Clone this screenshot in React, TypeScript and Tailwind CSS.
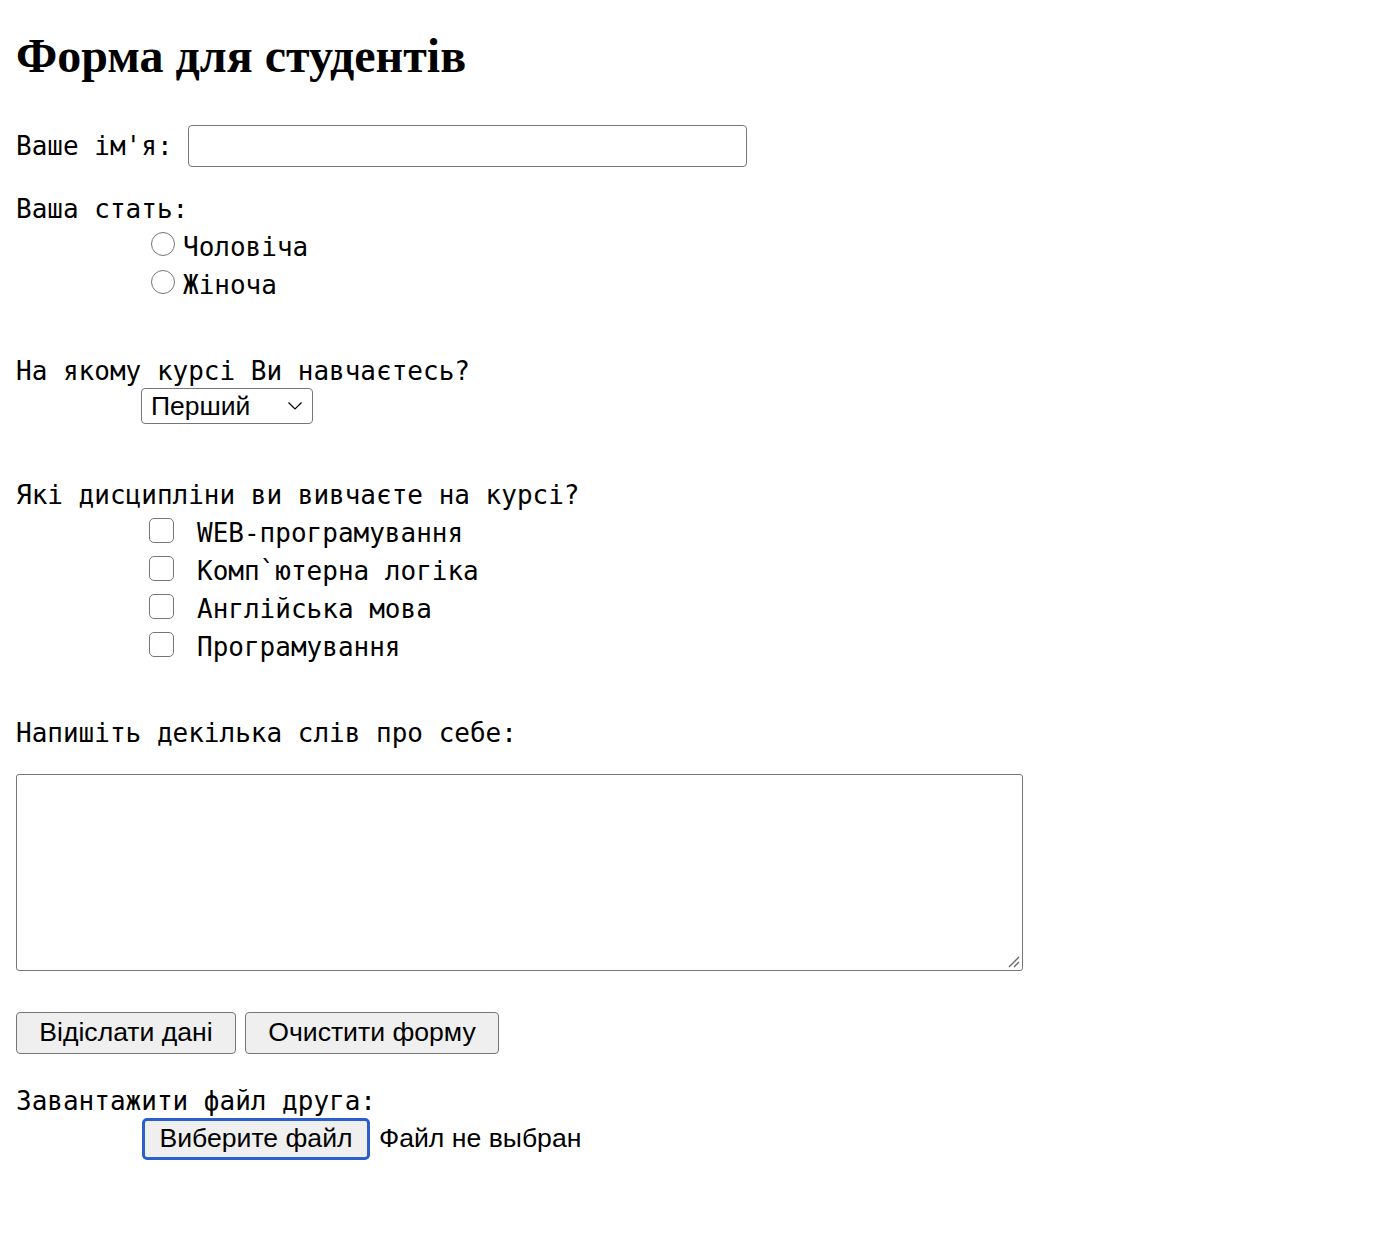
import React from "react";

const mono = "font-['DejaVu_Sans_Mono','Liberation_Mono',monospace] text-[26px] text-black";
const sans = "font-['Liberation_Sans',Arial,sans-serif]";

function Radio({ label }: { label: string }) {
  return (
    <div className="flex h-[38px] items-center pl-[135px]">
      <span className="mb-[6px] inline-block h-[24px] w-[24px] rounded-full border-[1.5px] border-[#767676] bg-white" />
      <span className={`${mono} ml-[8px] leading-[38px]`}>{label}</span>
    </div>
  );
}

function Check({ label }: { label: string }) {
  return (
    <div className="flex h-[38px] items-center pl-[133px]">
      <span className="mb-[6px] inline-block h-[25px] w-[25px] rounded-[5px] border-[1.5px] border-[#767676] bg-white" />
      <span className={`${mono} ml-[23px] leading-[38px]`}>{label}</span>
    </div>
  );
}

export default function App() {
  return (
    <div className="min-h-[1248px] bg-white pl-4 text-black">
      <h1 className="pt-[29px] font-['Liberation_Serif','Times_New_Roman',serif] text-[48px] font-bold leading-[54px]">
        Форма для студентів
      </h1>

      <div className="mt-[42px] flex h-[42px] items-center">
        <span className={`${mono} leading-[38px]`}>Ваше ім'я:</span>
        <div className="ml-[15px] h-[42px] w-[559px] rounded-[4px] border-[1.5px] border-[#767676] bg-white" />
      </div>

      <div className={`${mono} mt-[23px] h-[38px] leading-[38px]`}>Ваша стать:</div>
      <Radio label="Чоловіча" />
      <Radio label="Жіноча" />

      <div className={`${mono} mt-[50px] h-[34px] leading-[34px]`}>На якому курсі Ви навчаєтесь?</div>
      <div className="pl-[125px]">
        <div className="flex h-[36px] w-[172px] items-center justify-between rounded-[4px] border-[1.5px] border-[#767676] bg-white pl-[9px] pr-[9px]">
          <span className={`${sans} text-[26.5px] leading-none`}>Перший</span>
          <svg width="16" height="10" viewBox="0 0 16 10" fill="none">
            <path d="M1.5 1.5 L8 8 L14.5 1.5" stroke="#000" strokeWidth="1.2" />
          </svg>
        </div>
      </div>

      <div className={`${mono} mt-[52px] h-[38px] leading-[38px]`}>Які дисципліни ви вивчаєте на курсі?</div>
      <Check label="WEB-програмування" />
      <Check label="Комп`ютерна логіка" />
      <Check label="Англійська мова" />
      <Check label="Програмування" />

      <div className={`${mono} mt-[48px] h-[38px] leading-[38px]`}>Напишіть декілька слів про себе:</div>

      <div className="relative mt-[22px] h-[197px] w-[1007px] rounded-[3px] border-[1.5px] border-[#767676] bg-white">
        <svg className="absolute bottom-[2px] right-[2px]" width="14" height="14" viewBox="0 0 14 14">
          <path d="M13 3 L3 13 M13 8 L8 13" stroke="#666" strokeWidth="1.3" />
        </svg>
      </div>

      <div className="mt-[41px] flex h-[42px] gap-[9px]">
        <div className={`${sans} flex h-[42px] w-[220px] items-center justify-center rounded-[4px] border-[1.5px] border-[#767676] bg-[#efefef] text-[26.6px]`}>
          Відіслати дані
        </div>
        <div className={`${sans} flex h-[42px] w-[254px] items-center justify-center rounded-[4px] border-[1.5px] border-[#767676] bg-[#efefef] text-[26.6px]`}>
          Очистити форму
        </div>
      </div>

      <div className={`${mono} mt-[30px] h-[34px] leading-[34px]`}>Завантажити файл друга:</div>
      <div className="flex items-center pl-[126px]">
        <div className={`${sans} flex h-[42px] w-[228px] items-center justify-center rounded-[5px] border-[3px] border-[#2b5fcc] bg-[#efefef] text-[26.6px]`}>
          Виберите файл
        </div>
        <span className={`${sans} ml-[9px] text-[26.6px]`}>Файл не выбран</span>
      </div>
    </div>
  );
}
